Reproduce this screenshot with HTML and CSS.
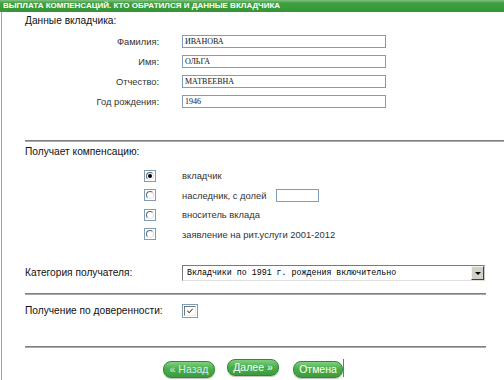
FILE: index.html
```html
<!DOCTYPE html>
<html lang="ru">
<head>
    <meta charset="UTF-8">
    <title>Выплата компенсаций</title>
    <link rel="stylesheet" href="styles.css">
</head>
<body>
    <div class="page">
        <div class="title">ВЫПЛАТА КОМПЕНСАЦИЙ. КТО ОБРАТИЛСЯ И ДАННЫЕ ВКЛАДЧИКА</div>
        <div class="content">
            <div class="heading first">Данные вкладчика:</div>
            <div class="fields">
                <div class="row"><span class="lbl">Фамилия:</span><span class="input">ИВАНОВА</span></div>
                <div class="row"><span class="lbl">Имя:</span><span class="input">ОЛЬГА</span></div>
                <div class="row"><span class="lbl">Отчество:</span><span class="input">МАТВЕЕВНА</span></div>
                <div class="row"><span class="lbl">Год рождения:</span><span class="input">1946</span></div>
            </div>
            <div class="sep wide"></div>

            <div class="heading h2">Получает компенсацию:</div>
            <div class="radios">
                <div class="radio-row"><span class="box"><span class="radio on"></span></span><span class="opt">вкладчик</span></div>
                <div class="radio-row"><span class="box"><span class="radio"></span></span><span class="opt">наследник, с долей</span><span class="share"></span></div>
                <div class="radio-row"><span class="box"><span class="radio"></span></span><span class="opt">вноситель вклада</span></div>
                <div class="radio-row"><span class="box"><span class="radio"></span></span><span class="opt">заявление на рит.услуги 2001-2012</span></div>
            </div>

            <div class="line-row cat">
                <span class="heading wlbl">Категория получателя:</span>
                <span class="select">Вкладчики по 1991 г. рождения включительно<span class="arrow"></span></span>
            </div>
            <div class="sep s2"></div>

            <div class="line-row proxy">
                <span class="heading wlbl">Получение по доверенности:</span>
                <span class="check">
                    <svg width="9" height="8" viewBox="0 0 9 8"><polyline points="1.5,3.5 3.5,6 7.5,1.5" fill="none" stroke="#111" stroke-width="1.1"/></svg>
                </span>
            </div>
            <div class="sep s3"></div>

            <div class="buttons">
                <span class="btn back">« Назад</span>
                <span class="btn next">Далее »</span>
                <span class="btn cancel">Отмена</span>
                <span class="edge"></span>
            </div>
        </div>
    </div>
</body>
</html>
```

FILE: styles.css
```css
body {
    margin: 0;
    font-family: "Liberation Sans", Arial, sans-serif;
    background-color: #fff;
    color: #111;
}
.page {
    margin-left: 1px;
    border-left: 1px solid #8fae8f;
    height: 380px;
}
.title {
    margin-left: -2px;
    height: 12px;
    line-height: 12px;
    padding-left: 3px;
    background: linear-gradient(#80c080 0, #40a040 3px, #339633 100%);
    color: #fff;
    font-family: "Liberation Sans", Arial, sans-serif;
    font-weight: bold;
    font-size: 8px;
    white-space: nowrap;
}
.content {
    display: flex;
    flex-direction: column;
    align-items: flex-start;
    padding-left: 23px;
}
.heading {
    font-size: 10.2px;
    line-height: 13px;
    color: #111;
}
.first {
    margin-top: 2px;
}
.fields {
    display: flex;
    flex-direction: column;
    gap: 7px;
    margin-top: 8px;
}
.row {
    display: flex;
    align-items: center;
    height: 13px;
}
.lbl {
    width: 134px;
    margin-right: 23px;
    text-align: right;
    font-size: 9.3px;
    color: #333;
}
.input {
    box-sizing: border-box;
    width: 204px;
    height: 13px;
    border: 1px solid #7f9db9;
    padding-left: 2px;
    font-family: "Liberation Serif", serif;
    font-size: 8px;
    line-height: 11px;
}
.sep {
    width: 461px;
    height: 0;
    border-top: 1px solid #808080;
    border-bottom: 1px solid #a9a9a9;
}
.sep.wide {
    width: 479px;
    margin-top: 32px;
}
.h2 {
    margin-top: 3px;
}
.radios {
    display: flex;
    flex-direction: column;
    gap: 6.5px;
    margin-top: 11px;
}
.radio-row {
    display: flex;
    align-items: center;
    height: 13px;
    font-size: 9.4px;
    color: #333;
}
.box {
    box-sizing: border-box;
    width: 12px;
    height: 12px;
    margin-left: 119px;
    margin-right: 26px;
    border: 1px solid #7f9db9;
    display: flex;
    align-items: center;
    justify-content: center;
}
.radio {
    box-sizing: border-box;
    width: 8px;
    height: 8px;
    border-radius: 50%;
    border: 1px solid;
    border-color: #666 #ddd #e8e8e8 #666;
    display: flex;
    align-items: center;
    justify-content: center;
}
.radio.on::after {
    content: "";
    width: 4px;
    height: 4px;
    border-radius: 50%;
    background: #000;
}
.share {
    box-sizing: border-box;
    width: 43px;
    height: 13px;
    margin-left: 10px;
    border: 1px solid #7f9db9;
}
.line-row {
    display: flex;
    align-items: center;
}
.wlbl {
    width: 157px;
}
.cat {
    margin-top: 24px;
}
.select {
    position: relative;
    box-sizing: border-box;
    width: 303px;
    height: 16px;
    border: 1px solid;
    border-color: #7a7a7a #c8c8c8 #e0e0e0 #7a7a7a;
    padding-left: 4px;
    font-family: "Liberation Mono", monospace;
    font-size: 8.3px;
    line-height: 14px;
    color: #000;
}
.arrow {
    position: absolute;
    right: 0;
    top: 0;
    box-sizing: border-box;
    width: 13px;
    height: 14px;
    background: #d4d0c8;
    border: 1px solid;
    border-color: #f4f4f4 #404040 #404040 #f4f4f4;
}
.arrow::after {
    content: "";
    position: absolute;
    left: 3px;
    top: 5px;
    border-left: 3px solid transparent;
    border-right: 3px solid transparent;
    border-top: 3px solid #000;
}
.s2 {
    margin-top: 12px;
}
.proxy {
    margin-top: 9px;
}
.check {
    box-sizing: border-box;
    width: 16px;
    height: 14px;
    border: 1px solid #7f9db9;
    padding: 1px;
    display: flex;
}
.check svg {
    box-sizing: border-box;
    width: 12px;
    height: 10px;
    border: 1px solid;
    border-color: #777 #eee #eee #777;
    padding: 0 1px;
}
.s3 {
    margin-top: 28px;
}
.buttons {
    display: flex;
    align-items: flex-start;
    margin-top: 11px;
    padding-left: 138px;
}
.btn {
    box-sizing: border-box;
    width: 52px;
    height: 17px;
    margin-right: 12px;
    border: 1px solid #2f8a2f;
    border-radius: 8px;
    background: linear-gradient(#7fd07f 0, #4cae4c 45%, #3a9c3a 100%);
    box-shadow: 0 1px 1px rgba(0, 0, 0, 0.25);
    color: #fff;
    font-size: 10.5px;
    line-height: 15px;
    text-align: center;
}
.btn.back {
    margin-top: 2px;
    color: #d8e8f4;
}
.btn.next {
    margin-right: 14px;
}
.btn.cancel {
    width: 50px;
    margin-top: 2px;
    margin-right: 0;
}
.edge {
    width: 1px;
    height: 18px;
    background: #3a9c3a;
}
```
